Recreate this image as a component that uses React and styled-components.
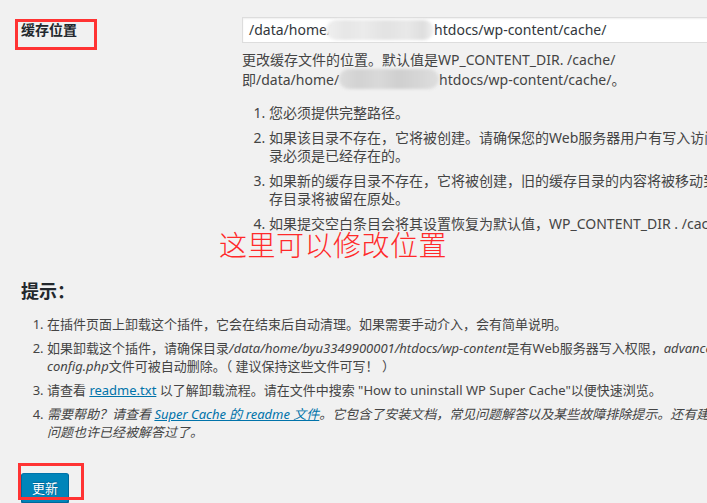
import React from "react";
import styled, { createGlobalStyle } from "styled-components";

const Global = createGlobalStyle`
  html, body {
    margin: 0;
    padding: 0;
    background: #f1f1f1;
    overflow: hidden;
  }
  body {
    font-family: "Noto Sans", "Noto Sans CJK SC", sans-serif;
    color: #444;
    font-size: 14px;
  }
`;

const Page = styled.div`
  width: 1100px;
  position: relative;
  padding-top: 17px;
`;

const SettingRow = styled.div`
  display: flex;
  padding-left: 21px;
  position: relative;
`;

const Label = styled.div`
  position: relative;
  width: 221px;
  flex: none;
  font-size: 14px;
  line-height: 26px;
  font-weight: 600;
  color: #23282d;
  align-self: flex-start;
`;

const Highlight = styled.span`
  position: absolute;
  left: ${(p) => p.$left}px;
  top: ${(p) => p.$top}px;
  width: ${(p) => p.$w}px;
  height: ${(p) => p.$h}px;
  border: 3px solid #f33;
  box-sizing: border-box;
  pointer-events: none;
`;

const Field = styled.div`
  display: flex;
  flex-direction: column;
  width: 760px;
`;

const FakeInput = styled.div`
  box-sizing: border-box;
  width: 560px;
  height: 26px;
  background: #fff;
  border: 1px solid #ddd;
  box-shadow: inset 0 1px 2px rgba(0, 0, 0, 0.07);
  padding: 0 6px;
  font-size: 14px;
  line-height: 24px;
  color: #32373c;
  white-space: nowrap;
  display: flex;
  align-items: center;
`;

const Redaction = styled.span`
  display: inline-block;
  flex: none;
  width: ${(p) => p.$w}px;
  height: 20px;
  margin-left: ${(p) => p.$shift || 0}px;
  vertical-align: middle;
  border-radius: 10px;
  filter: blur(1.5px);
  background: ${(p) =>
    p.$tone === "light"
      ? "linear-gradient(90deg, #f0f0f0 0%, #e6e6e6 18%, #ebebeb 35%, #e2e2e2 55%, #e8e8e8 75%, #dedede 90%, #f2f2f2 100%)"
      : "linear-gradient(90deg, #dcdcdc 0%, #d2d2d2 20%, #d9d9d9 40%, #cfcfcf 60%, #d6d6d6 80%, #dedede 100%)"};
`;

const Description = styled.p`
  margin: 7px 0 0;
  font-size: 14px;
  line-height: 19px;
  color: #444;
  white-space: nowrap;
`;

const InlineRow = styled.span`
  display: flex;
  align-items: center;
`;

const Notes = styled.ol`
  margin: 15px 0 0;
  padding: 0 0 0 27px;
  font-size: 14px;
  line-height: 18px;
  white-space: nowrap;
  li + li {
    margin-top: 7px;
  }
`;

const Annotation = styled.div`
  position: absolute;
  left: 219px;
  top: 211px;
  font-family: "Noto Sans CJK SC", sans-serif;
  font-weight: 300;
  font-size: 28px;
  line-height: 32px;
  letter-spacing: 0.5px;
  color: #ff2a2a;
  white-space: nowrap;
`;

const Heading = styled.h2`
  margin: 46px 0 0 21px;
  font-size: 18px;
  line-height: 24px;
  font-weight: 600;
  color: #23282d;
`;

const Hints = styled.ol`
  margin: 12px 0 0 21px;
  padding: 0 0 0 26px;
  font-size: 13px;
  line-height: 18px;
  white-space: nowrap;
  li + li {
    margin-top: 6px;
  }
`;

const Em = styled.em`
  font-style: italic;
`;

const Link = styled.a`
  color: #0073aa;
  text-decoration: underline;
`;

const ButtonWrap = styled.div`
  position: relative;
  margin: 32px 0 0 21px;
  display: inline-block;
`;

const SubmitButton = styled.button`
  height: 30px;
  padding: 0 10px;
  font-family: "Noto Sans CJK SC", sans-serif;
  font-size: 13px;
  line-height: 28px;
  color: #fff;
  background: #0085ba;
  border: 1px solid;
  border-color: #0073aa #006799 #006799;
  border-radius: 3px;
  box-shadow: 0 1px 0 #006799;
  text-shadow: 0 -1px 1px #006799, 1px 0 1px #006799;
  cursor: pointer;
`;

export default function App() {
  return (
    <>
      <Global />
      <Page>
        <SettingRow>
          <Label>
            缓存位置
            <Highlight $left={-6} $top={2} $w={82} $h={31} />
          </Label>
          <Field>
            <FakeInput>
              /data/home/
              <Redaction $tone="light" $w={108} $shift={-6} />
              htdocs/wp-content/cache/
            </FakeInput>
            <Description>
              更改缓存文件的位置。默认值是WP_CONTENT_DIR. /cache/
              <InlineRow>
                即/data/home/
                <Redaction $w={100} />
                htdocs/wp-content/cache/。
              </InlineRow>
            </Description>
            <Notes>
              <li>您必须提供完整路径。</li>
              <li>
                如果该目录不存在，它将被创建。请确保您的Web服务器用户有写入访问权限，父目
                <br />
                录必须是已经存在的。
              </li>
              <li>
                如果新的缓存目录不存在，它将被创建，旧的缓存目录的内容将被移动到新的位置。否则，旧的缓
                <br />
                存目录将被留在原处。
              </li>
              <li>如果提交空白条目会将其设置恢复为默认值，WP_CONTENT_DIR . /cache/。</li>
            </Notes>
          </Field>
          <Annotation>这里可以修改位置</Annotation>
        </SettingRow>

        <Heading>提示：</Heading>
        <Hints>
          <li>在插件页面上卸载这个插件，它会在结束后自动清理。如果需要手动介入，会有简单说明。</li>
          <li>
            如果卸载这个插件，请确保目录<Em>/data/home/byu3349900001/htdocs/wp-content</Em>
            是有Web服务器写入权限，<Em>advanced-cache.php</Em> 和 <Em>wp-</Em>
            <br />
            <Em>config.php</Em>文件可被自动删除。（ 建议保持这些文件可写！ ）
          </li>
          <li>
            请查看 <Link href="#">readme.txt</Link> 以了解卸载流程。请在文件中搜索 "How to uninstall WP
            Super Cache"以便快速浏览。
          </li>
          <li>
            <Em>
              需要帮助？请查看 <Link href="#">Super Cache 的 readme 文件</Link>
              。它包含了安装文档，常见问题解答以及某些故障排除提示。还有建议的支持论坛，您的
              <br />
              问题也许已经被解答过了。
            </Em>
          </li>
        </Hints>

        <ButtonWrap>
          <SubmitButton>更新</SubmitButton>
          <Highlight $left={-3} $top={-10} $w={66} $h={37} />
        </ButtonWrap>
      </Page>
    </>
  );
}
